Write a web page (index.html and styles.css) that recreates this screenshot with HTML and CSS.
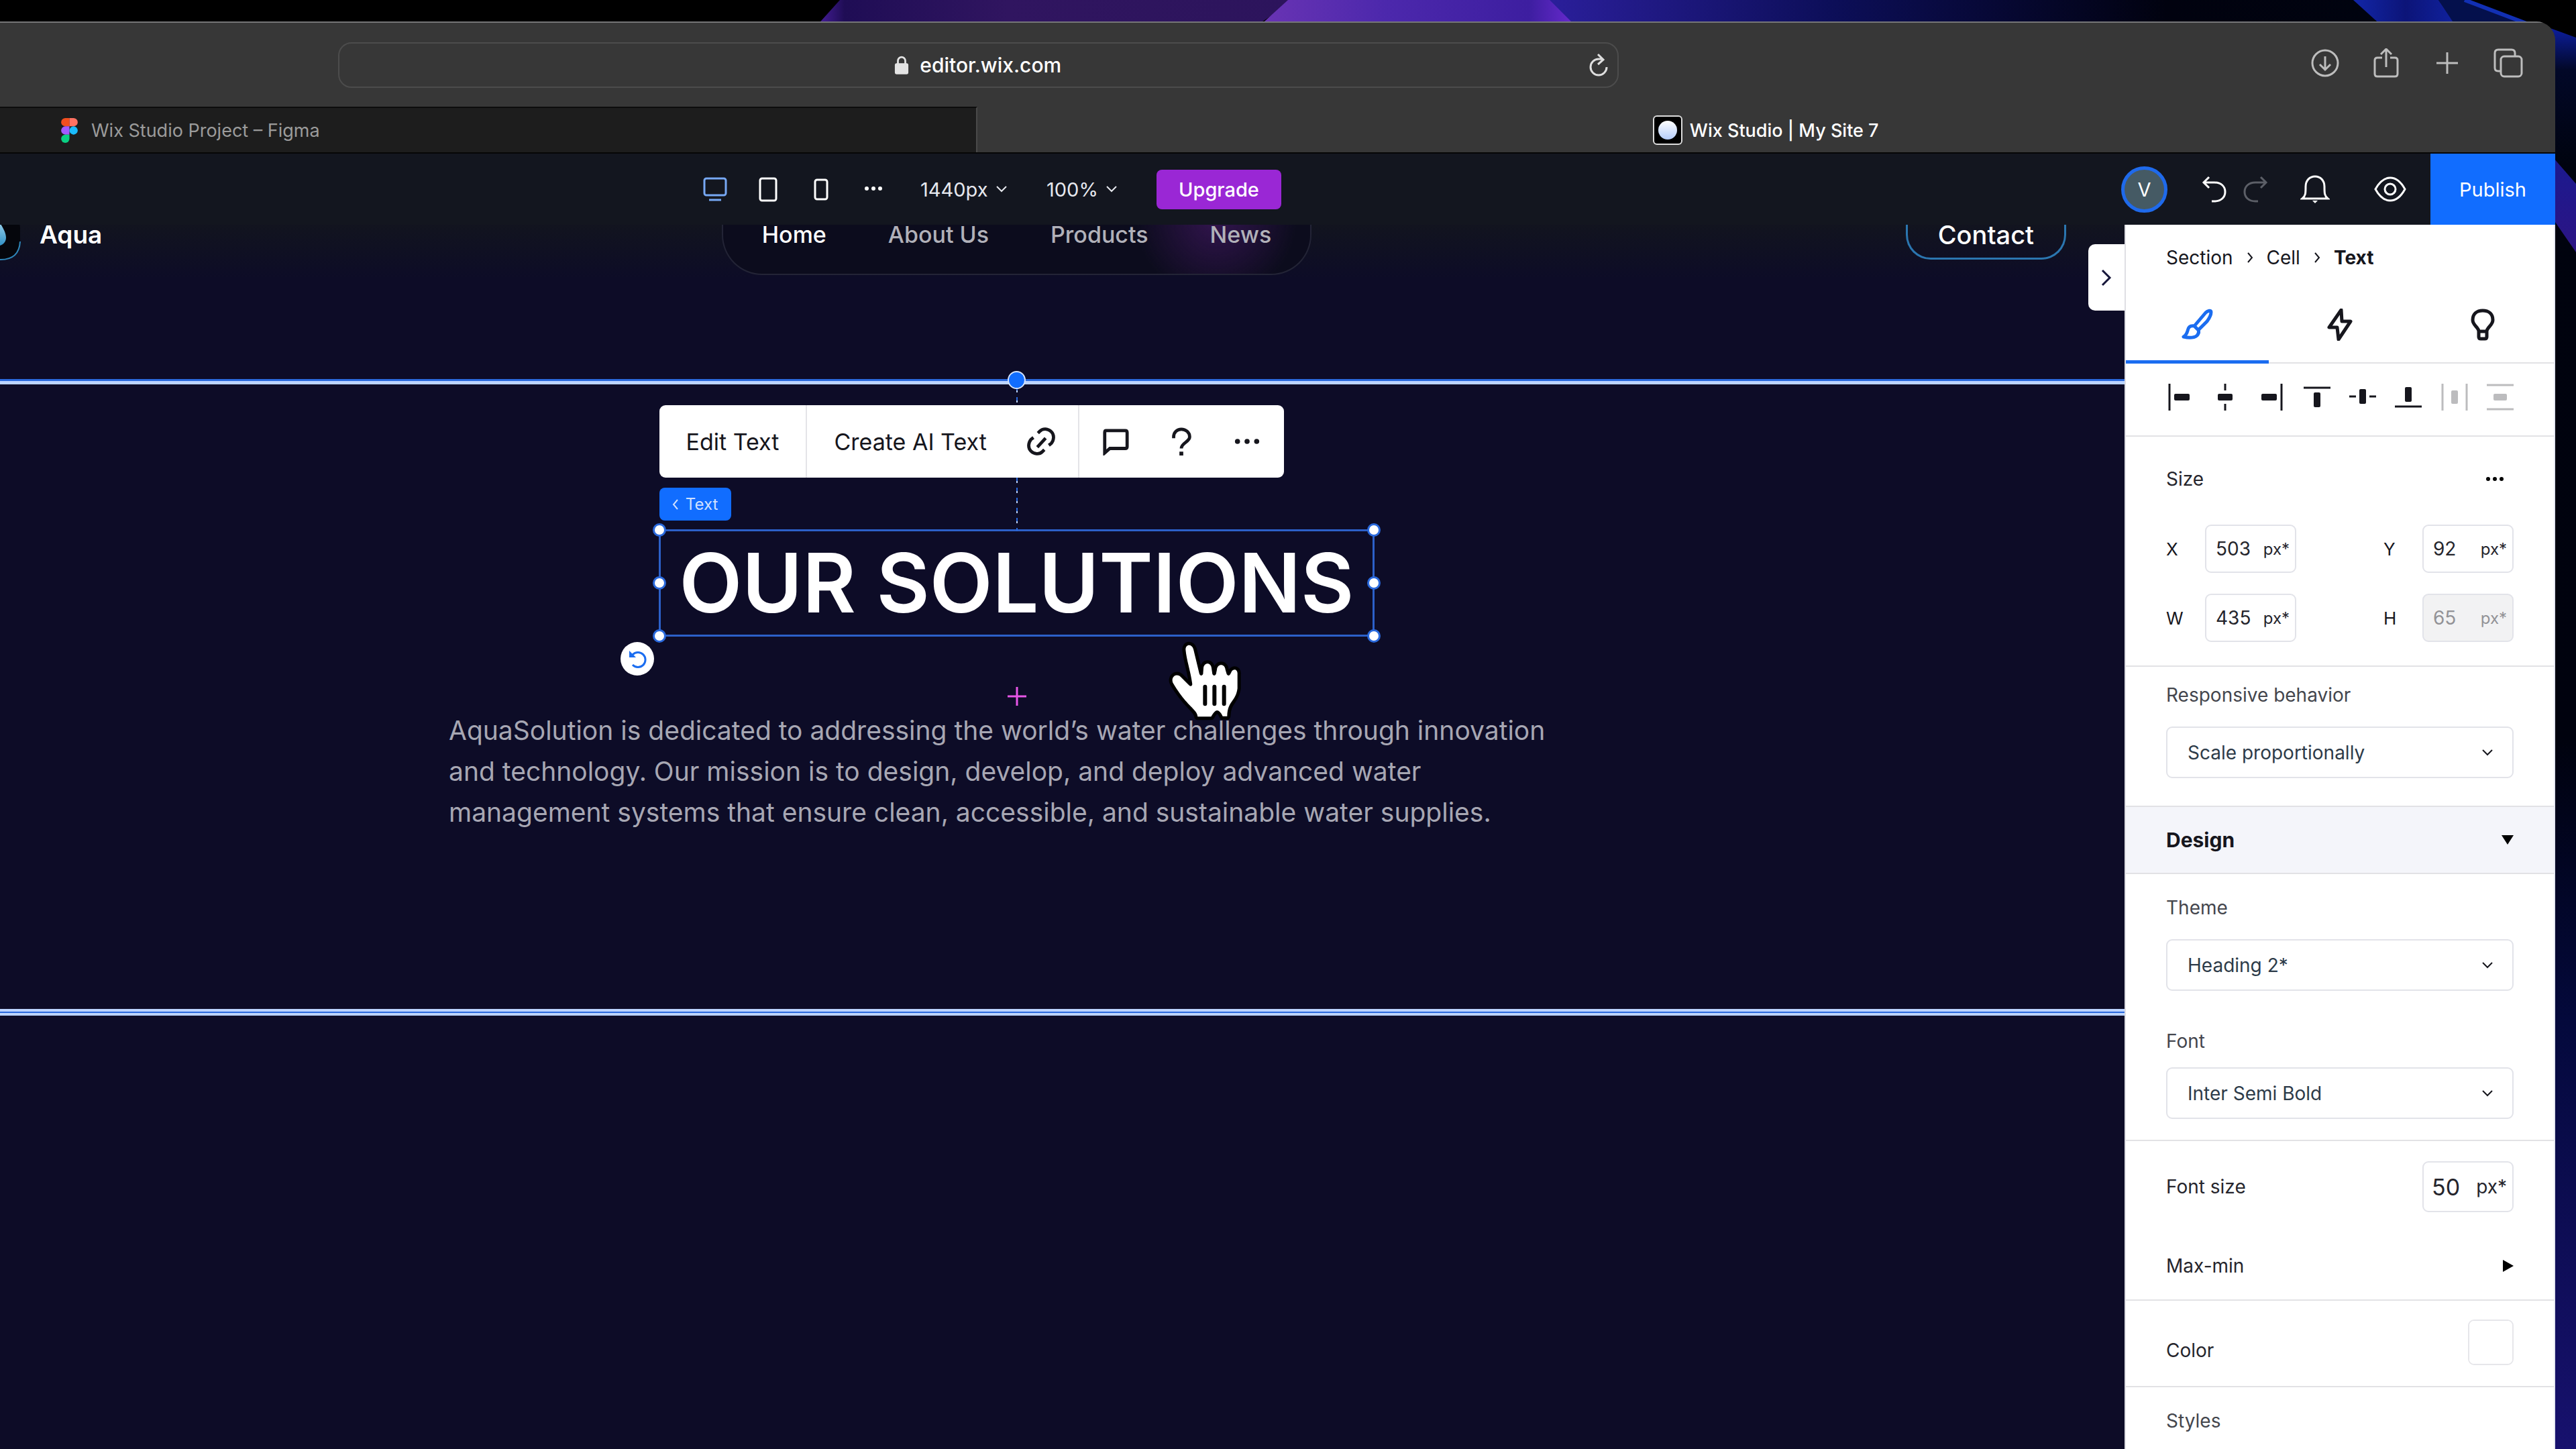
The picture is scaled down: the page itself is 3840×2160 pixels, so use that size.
FILE: index.html
```html
<!DOCTYPE html>
<html lang="en">
<head>
    <meta charset="UTF-8">
    <title>Wix Studio | My Site 7</title>
    <link rel="stylesheet" href="styles.css">
</head>
<body>
    <svg class="wallpaper" viewBox="0 0 3840 2160" preserveAspectRatio="none" aria-hidden="true">
        <defs>
            <linearGradient id="w1"><stop offset="0" stop-color="#4a1fa0"/><stop offset="0.06" stop-color="#1f0d55"/><stop offset="0.4" stop-color="#301560"/><stop offset="1" stop-color="#2c145c"/></linearGradient>
            <linearGradient id="w2"><stop offset="0" stop-color="#6a34b4"/><stop offset="0.4" stop-color="#4c28ac"/><stop offset="0.85" stop-color="#3d1ea0"/><stop offset="1" stop-color="#6a2ad0"/></linearGradient>
            <linearGradient id="w3"><stop offset="0" stop-color="#2b1f9c"/><stop offset="0.35" stop-color="#0c0e58"/><stop offset="0.75" stop-color="#01020f"/><stop offset="1" stop-color="#00030f"/></linearGradient>
            <linearGradient id="w4"><stop offset="0" stop-color="#1226a8"/><stop offset="0.5" stop-color="#0c1478"/><stop offset="1" stop-color="#1022a0"/></linearGradient>
            <linearGradient id="w5" x1="0" y1="0" x2="0" y2="1"><stop offset="0" stop-color="#0c1ea0"/><stop offset="0.03" stop-color="#020828"/><stop offset="0.1" stop-color="#00030e"/><stop offset="0.5" stop-color="#00020e"/><stop offset="0.7" stop-color="#04093c"/><stop offset="1" stop-color="#17116e"/></linearGradient>
            <linearGradient id="w6" x1="0" y1="0" x2="0" y2="1"><stop offset="0" stop-color="#1a1a90"/><stop offset="1" stop-color="#2c1484"/></linearGradient>
        </defs>
        <path d="M1252 0H1930L1870 40H1216Z" fill="url(#w1)"/>
        <path d="M2300 0H3540V40H2300Z" fill="url(#w3)"/>
        <path d="M1920 0H2310L2350 40H1876Z" fill="url(#w2)"/>
        <path d="M3508 0H3635L3664 40H3552Z" fill="url(#w4)"/>
        <path d="M3635 0H3674L3790 44H3664Z" fill="#04104c"/>
        <path d="M3674 0L3790 44" stroke="#1230b4" stroke-width="6"/>
        <path d="M3796 40L3840 56V2160H3796Z" fill="url(#w5)"/>
        <path d="M3800 228L3840 274V376L3800 318Z" fill="url(#w6)"/>
    </svg>

    <div class="browser">
        <header class="toolbar">
            <div class="address">
                <svg class="lock" viewBox="0 0 24 32"><path d="M6 14V9a6 6 0 0 1 12 0v5" fill="none" stroke="#e4e4e4" stroke-width="3"/><rect x="1" y="13" width="22" height="18" rx="3" fill="#e4e4e4"/></svg>
                <input class="url" type="text" value="editor.wix.com" aria-label="Address">
                <button class="reload" aria-label="Reload"><svg viewBox="0 0 32 38"><path d="M15 3L23 11L15 18M22 10H16A12 12 0 1 0 28 22" /></svg></button>
            </div>
            <div class="actions">
                <button aria-label="Downloads"><svg viewBox="0 0 44 44"><circle cx="22" cy="22" r="19"/><path d="M22 12V31M14 24L22 32L30 24"/></svg></button>
                <button aria-label="Share"><svg viewBox="0 0 44 44"><path d="M16 14H9Q5 14 5 18V38Q5 42 9 42H35Q39 42 39 38V18Q39 14 35 14H28M22 28V2M14 9L22 1L30 9"/></svg></button>
                <button aria-label="New tab"><svg viewBox="0 0 44 44"><path d="M22 6V38M6 22H38"/></svg></button>
                <button aria-label="Tab overview"><svg viewBox="0 0 44 44"><rect x="11" y="12" width="31" height="30" rx="5"/><path d="M11 34H7Q2 34 2 29V7Q2 2 7 2H27Q32 2 32 7V12"/></svg></button>
            </div>
        </header>

        <nav class="tabs">
            <a class="tab" href="#figma">
                <svg class="figma" viewBox="0 0 24 36"><path d="M12 0H6a6 6 0 0 0 0 12h6z" fill="#f24e1e"/><path d="M12 0h6a6 6 0 0 1 0 12h-6z" fill="#ff7262"/><path d="M12 12H6a6 6 0 0 0 0 12h6z" fill="#a259ff"/><circle cx="18" cy="18" r="6" fill="#1abcfe"/><path d="M12 24H6a6 6 0 1 0 6 6z" fill="#0acf83"/></svg>
                Wix Studio Project – Figma
            </a>
            <a class="tab current" href="#studio">
                <span class="favicon"></span>
                Wix Studio | My Site 7
            </a>
        </nav>

        <div class="editor-bar">
            <div class="view-tools">
                <div class="devices">
                    <button class="on" aria-label="Desktop"><svg viewBox="0 0 44 44"><rect x="6" y="6" width="32" height="25" rx="3"/><path d="M13 38H31"/></svg></button>
                    <button aria-label="Tablet"><svg viewBox="0 0 44 44"><rect x="10" y="6" width="24" height="33" rx="3"/></svg></button>
                    <button aria-label="Phone"><svg viewBox="0 0 44 44"><rect x="13" y="8" width="18" height="29" rx="3"/></svg></button>
                    <button aria-label="More breakpoints"><svg class="solid" viewBox="0 0 44 44"><circle cx="11" cy="21" r="3"/><circle cx="21" cy="21" r="3"/><circle cx="31" cy="21" r="3"/></svg></button>
                </div>
                <label class="bar-select">
                    <select aria-label="Canvas width"><option>1440px</option></select>
                    <svg viewBox="0 0 16 10"><path d="M1 1L8 8L15 1"/></svg>
                </label>
                <label class="bar-select">
                    <select aria-label="Zoom"><option>100%</option></select>
                    <svg viewBox="0 0 16 10"><path d="M1 1L8 8L15 1"/></svg>
                </label>
                <button class="upgrade">Upgrade</button>
            </div>
            <div class="account-tools">
                <button class="avatar">V</button>
                <div class="history">
                    <button aria-label="Undo"><svg viewBox="0 0 44 44"><path d="M14 4L6 12L14 20M6 12H22C32 12 38 18 38 26S32 40 22 40H18"/></svg></button>
                    <button class="off" aria-label="Redo"><svg viewBox="0 0 44 44"><path d="M30 4L38 12L30 20M38 12H22C12 12 6 18 6 26S12 40 22 40H26"/></svg></button>
                </div>
                <button class="wide" aria-label="Notifications"><svg viewBox="0 0 44 44"><path d="M3 36C8 32 8 28 8 18C8 9 14 3 22 3S36 9 36 18C36 28 36 32 41 36Z"/><path class="clapper" d="M18 39H26L22 43Z"/></svg></button>
                <button class="wide" aria-label="Preview"><svg class="eye" viewBox="0 0 48 44"><path d="M2 22C8 11 15 5 24 5S40 11 46 22C40 33 33 39 24 39S8 33 2 22Z"/><circle cx="24" cy="22" r="8"/></svg></button>
                <button class="publish">Publish</button>
            </div>
        </div>

        <div class="workspace">
            <main class="canvas">
                <!-- the header is scrolled half under the editor bar -->
                <div class="site-header">
                    <a class="brand" href="#aqua">
                        <svg class="logo" viewBox="0 23 76 53">
                            <defs><linearGradient id="drop" x1="0" y1="0" x2="0" y2="1"><stop offset="0" stop-color="#b8e4f8"/><stop offset="1" stop-color="#2f8fc4"/></linearGradient></defs>
                            <rect x="1" y="1" width="74" height="74" rx="28" fill="#05060c"/>
                            <path d="M75 48C74 66 64 75 46 75H28" fill="none" stroke="#2e86b8" stroke-width="2"/>
                            <path d="M38 8C44 20 54 32 54 42C54 50 48 55 38 55S22 50 22 42C22 32 32 20 38 8Z" fill="url(#drop)"/>
                        </svg>
                        Aqua
                    </a>
                    <nav class="menu">
                        <a class="active" href="#home">Home</a>
                        <a href="#about">About Us</a>
                        <a href="#products">Products</a>
                        <a href="#news">News</a>
                    </nav>
                    <a class="contact" href="#contact">Contact</a>
                </div>

                <section class="solutions">
                    <div class="selected">
                        <h1>OUR SOLUTIONS</h1>
                        <div class="guide"></div>
                        <div class="anchor"></div>
                        <div class="text-toolbar">
                            <button>Edit Text</button>
                            <div class="group">
                                <button class="ai">Create AI Text</button>
                                <button class="tool" aria-label="Link"><svg viewBox="0 0 44 44"><path d="M16 31L29 17M17 9L20 6C25 1 33 2 38 7S42 20 38 25L34 28M27 35L24 38C19 43 11 42 6 37S2 24 6 19L10 16"/></svg></button>
                            </div>
                            <div class="group">
                                <button class="tool" aria-label="Comment"><svg viewBox="0 0 44 44"><path d="M7 5H37Q40 5 40 8V30Q40 33 37 33H13L5 40V8Q5 5 7 5Z"/></svg></button>
                                <button class="tool" aria-label="Help"><svg viewBox="0 0 44 44"><path d="M10 17V15C10 8 15 3 22 3S35 8 35 15C35 23 22 24 22 33"/><rect class="fill" x="19" y="38" width="6" height="6"/></svg></button>
                                <button class="tool" aria-label="More"><svg class="solid" viewBox="0 0 44 44"><circle cx="7" cy="22" r="4"/><circle cx="22" cy="22" r="4"/><circle cx="37" cy="22" r="4"/></svg></button>
                            </div>
                        </div>
                        <button class="tag"><svg viewBox="0 0 10 16"><path d="M8 1L2 8L8 15"/></svg>Text</button>
                        <i class="handle tl"></i><i class="handle tr"></i>
                        <i class="handle ml"></i><i class="handle mr"></i>
                        <i class="handle bl"></i><i class="handle br"></i>
                        <button class="rotate" aria-label="Reset rotation"><svg viewBox="0 0 50 50"><path d="M18 19A11 11 0 1 1 18 34" fill="none" stroke="#1b6df0" stroke-width="3"/><path d="M13 13V23H23Z" fill="#1b6df0"/></svg></button>
                        <svg class="plus" viewBox="0 0 28 28"><path d="M14 0V28M0 14H28"/></svg>
                        <svg class="cursor" viewBox="0 0 480 480">
                            <path class="hand" d="M148 112C148 86 176 86 183 110L210 222Q218 234 226 222L228 195C230 168 262 168 264 195L268 222Q276 234 284 222L288 202C290 174 324 174 326 202L332 222Q340 234 348 222L354 210C362 196 382 200 380 222V286C372 346 336 340 334 410H314Q302 384 288 384Q276 386 262 412H202C200 378 156 370 92 262C80 238 104 214 126 234L162 270Q174 282 178 268C172 214 152 160 148 112Z"/>
                            <path d="M235 278V355M277 278V355M320 278V355" stroke="#000" stroke-width="18" stroke-linecap="round"/>
                        </svg>
                    </div>
                    <p class="intro">AquaSolution is dedicated to addressing the world’s water challenges through innovation and technology. Our mission is to design, develop, and deploy advanced water management systems that ensure clean, accessible, and sustainable water supplies.</p>
                </section>

                <button class="collapse" aria-label="Collapse panel"><svg viewBox="0 0 16 26"><path d="M2 2L13 13L2 24"/></svg></button>
            </main>

            <aside class="inspector">
                <nav class="crumbs">
                    <a href="#section">Section</a>
                    <svg viewBox="0 0 10 16"><path d="M2 1L8 8L2 15"/></svg>
                    <a href="#cell">Cell</a>
                    <svg viewBox="0 0 10 16"><path d="M2 1L8 8L2 15"/></svg>
                    <b>Text</b>
                </nav>

                <div class="panel-tabs">
                    <button class="on" aria-label="Design"><svg viewBox="0 0 48 48"><path d="M20 26L37 6C40 3 45 2 45 5C45 9 42 15 39 19L26 32M20 26L26 32M20 26C13 25 11 28 10 33C9 37 7 40 4 42C12 44 22 44 25 39C27 36 27 34 26 32"/></svg></button>
                    <button aria-label="Interactions"><svg viewBox="0 0 48 48"><path d="M26 2L8 28H20L22 46L40 19H27Z"/></svg></button>
                    <button aria-label="Tips"><svg viewBox="0 0 48 48"><path d="M18 34C18 28 9 25 9 17C9 8 15 3 24 3S39 8 39 17C39 25 30 28 30 34V42Q30 45 27 45H21Q18 45 18 42ZM18 34H30"/></svg></button>
                </div>

                <div class="align">
                    <button aria-label="Align left"><svg viewBox="0 0 40 40"><path d="M5 0V40"/><rect x="12" y="15" width="23" height="10" rx="2"/></svg></button>
                    <button aria-label="Align center"><svg viewBox="0 0 40 40"><path d="M20 0V10M20 30V40"/><rect x="9" y="15" width="22" height="10" rx="2"/></svg></button>
                    <button aria-label="Align right"><svg viewBox="0 0 40 40"><path d="M35 0V40"/><rect x="5" y="15" width="23" height="10" rx="2"/></svg></button>
                    <button aria-label="Align top"><svg viewBox="0 0 40 40"><path d="M0 6H40"/><rect x="15" y="13" width="10" height="22" rx="2"/></svg></button>
                    <button aria-label="Align middle"><svg viewBox="0 0 40 40"><path d="M0 19H10M30 19H40"/><rect x="15" y="8" width="10" height="22" rx="2"/></svg></button>
                    <button aria-label="Align bottom"><svg viewBox="0 0 40 40"><path d="M0 34H40"/><rect x="15" y="5" width="10" height="22" rx="2"/></svg></button>
                    <button class="off" aria-label="Distribute horizontally"><svg viewBox="0 0 40 40"><path d="M2 0V40M38 0V40"/><rect x="15" y="10" width="10" height="20" rx="2"/></svg></button>
                    <button class="off" aria-label="Distribute vertically"><svg viewBox="0 0 40 40"><path d="M0 2H40M0 38H40"/><rect x="10" y="15" width="20" height="10" rx="2"/></svg></button>
                </div>

                <div class="block size">
                    <div class="row">
                        <span class="name">Size</span>
                        <button class="more" aria-label="More"><svg viewBox="0 0 28 8"><circle cx="4" cy="4" r="3"/><circle cx="14" cy="4" r="3"/><circle cx="24" cy="4" r="3"/></svg></button>
                    </div>
                    <div class="fields">
                        <label for="x">X</label>
                        <div class="num"><input id="x" type="text" value="503"><span>px*</span></div>
                        <label for="y">Y</label>
                        <div class="num"><input id="y" type="text" value="92"><span>px*</span></div>
                        <label for="w">W</label>
                        <div class="num"><input id="w" type="text" value="435"><span>px*</span></div>
                        <label for="h">H</label>
                        <div class="num disabled"><input id="h" type="text" value="65" disabled><span>px*</span></div>
                    </div>
                </div>

                <div class="block behavior">
                    <label class="name soft" for="behavior">Responsive behavior</label>
                    <div class="select">
                        <select id="behavior"><option>Scale proportionally</option></select>
                        <svg viewBox="0 0 16 10"><path d="M1 1L8 8L15 1"/></svg>
                    </div>
                </div>

                <button class="block accordion">Design<svg viewBox="0 0 18 14"><path d="M0 0H18L9 14Z"/></svg></button>

                <div class="block type">
                    <label class="name soft" for="theme">Theme</label>
                    <div class="select">
                        <select id="theme"><option>Heading 2*</option></select>
                        <svg viewBox="0 0 16 10"><path d="M1 1L8 8L15 1"/></svg>
                    </div>
                    <label class="name soft second" for="font">Font</label>
                    <div class="select">
                        <select id="font"><option>Inter Semi Bold</option></select>
                        <svg viewBox="0 0 16 10"><path d="M1 1L8 8L15 1"/></svg>
                    </div>
                </div>

                <div class="block scale">
                    <div class="row">
                        <label class="name" for="fontsize">Font size</label>
                        <div class="num big"><input id="fontsize" type="text" value="50"><span>px*</span></div>
                    </div>
                    <button class="row maxmin">Max-min<svg viewBox="0 0 16 18"><path d="M0 0V18L16 9Z"/></svg></button>
                </div>

                <div class="block color">
                    <label class="name" for="color">Color</label>
                    <input id="color" type="color" value="#ffffff">
                </div>

                <div class="block styles"><span class="name soft">Styles</span></div>
            </aside>
        </div>
    </div>
</body>
</html>
```
FILE: styles.css
```css
* {
    box-sizing: border-box;
}

body {
    margin: 0;
    background: #000;
    font-family: Inter, "Liberation Sans", sans-serif;
    font-size: 28px;
    color: #16161d;
    overflow: hidden;
}

button, input, select {
    margin: 0;
    padding: 0;
    border: 0;
    background: none;
    color: inherit;
    font: inherit;
    appearance: none;
}

button {
    display: flex;
    align-items: center;
    justify-content: center;
}

a {
    color: inherit;
    text-decoration: none;
}

svg {
    display: block;
    flex: none;
    fill: none;
    stroke: currentColor;
    stroke-width: 3;
}

.wallpaper {
    position: absolute;
    inset: 0;
    width: 100%;
    height: 100%;
    stroke: none;
    z-index: -1;
}

.browser {
    display: flex;
    flex-direction: column;
    min-height: calc(100vh - 32px);
    margin: 32px 31px 0 0;
    border-top-right-radius: 28px;
    overflow: hidden;
    background: #373737;
}

/* browser chrome */
.toolbar {
    display: grid;
    grid-template-columns: 1908fr 1396fr;
    align-items: center;
    height: 127px;
    padding-left: 504px;
    border-top: 2px solid #757577;
}

.address {
    display: flex;
    align-items: center;
    justify-content: center;
    gap: 16px;
    height: 68px;
    border: 2px solid #4c4c4c;
    border-radius: 20px;
    position: relative;
    color: #fff;
}

.lock {
    width: 22px;
    height: 32px;
    stroke: none;
}

.url {
    width: 212px;
    font-size: 30px;
    font-weight: 500;
}

.reload {
    position: absolute;
    right: 12px;
    color: #dedede;
}

.reload svg {
    width: 32px;
    height: 38px;
}

.actions {
    display: flex;
    justify-content: flex-end;
    gap: 47px;
    padding: 0 48px 6px 0;
    color: #bdbdbd;
}

.actions svg {
    width: 44px;
    height: 44px;
}

.tabs {
    display: grid;
    grid-template-columns: 1457fr 2351fr;
    height: 70px;
    border-bottom: 2px solid #060606;
}

.tab {
    display: flex;
    align-items: center;
    gap: 20px;
    padding-left: 91px;
    background: #1d1d1d;
    border-top: 2px solid #0c0c0c;
    border-right: 2px solid #4a4a4a;
    color: #9b9b9b;
    font-size: 27px;
}

.tab.current {
    justify-content: center;
    gap: 11px;
    padding: 0;
    background: none;
    border-color: transparent;
    color: #fff;
    font-weight: 500;
}

.figma {
    width: 25px;
    height: 37px;
    stroke: none;
}

.favicon {
    display: flex;
    align-items: center;
    justify-content: center;
    width: 44px;
    height: 44px;
    border: 2px solid #dcdcdc;
    border-radius: 6px;
    background: #000;
}

.favicon::before {
    content: "";
    width: 28px;
    height: 28px;
    border-radius: 50%;
    background: linear-gradient(#fff, #b4ccfb);
}

/* editor top bar */
.editor-bar {
    display: flex;
    justify-content: space-between;
    height: 106px;
    padding-left: 1044px;
    background: #13161f;
    color: #fff;
    font-size: 29px;
}

.editor-bar svg {
    width: 44px;
    height: 44px;
}

.view-tools, .account-tools, .history, .devices {
    display: flex;
    align-items: center;
}

.devices {
    gap: 35px;
    margin-right: 47px;
}

.devices .on {
    color: #77a8f4;
}

svg.solid {
    fill: currentColor;
    stroke: none;
}

.bar-select {
    display: flex;
    align-items: center;
    gap: 12px;
    margin-right: 59px;
    color: #e6e8ee;
}

.editor-bar .bar-select svg {
    width: 16px;
    height: 10px;
    stroke-width: 2;
}

.upgrade {
    height: 59px;
    padding: 0 33px;
    border-radius: 8px;
    background: #9a27d5;
    font-weight: 500;
}

.avatar {
    width: 69px;
    height: 69px;
    border: 5px solid #1f6aeb;
    border-radius: 50%;
    background: #455a64;
}

.history {
    gap: 17px;
    margin: 0 35px 0 48px;
}

.off {
    color: #5c5f67;
}

.wide {
    width: 64px;
    margin-right: 48px;
}

.wide + .wide {
    margin-right: 28px;
}

.editor-bar .eye {
    width: 48px;
}

.clapper {
    fill: currentColor;
    stroke: none;
}

.publish {
    align-self: stretch;
    width: 186px;
    background: #116dff;
}

.workspace {
    display: flex;
    flex: 1;
}

/* site canvas */
.canvas {
    position: relative;
    flex: 1;
    background: linear-gradient(#12141f, #0d0c27 80px);
    color: #fff;
}

.site-header {
    display: grid;
    grid-template-columns: 1fr auto 1fr;
    align-items: start;
    margin: 0 136px 158px 0;
    line-height: 30px;
    font-weight: 500;
}

.brand {
    display: flex;
    align-items: flex-start;
    gap: 28px;
    margin-left: -45px;
    font-size: 37px;
    font-weight: 600;
}

.logo {
    width: 76px;
    height: 53px;
    stroke: none;
}

.menu {
    display: flex;
    align-items: flex-start;
    gap: 92px;
    height: 75px;
    padding: 0 58px;
    border: 2px solid #232436;
    border-top: 0;
    border-radius: 0 0 60px 60px;
    background: radial-gradient(circle at 84% -9px, #32144e, rgba(30, 14, 50, 0) 120px), #0c0c1d;
    color: #b1b1b9;
    font-size: 34px;
}

.menu .active {
    color: #fff;
}

.contact {
    justify-self: end;
    height: 52px;
    margin-right: -49px;
    padding: 0 45px;
    border: 3px solid #2b76b0;
    border-top: 0;
    border-radius: 0 0 37px 37px;
    font-size: 38px;
}

.solutions {
    display: flex;
    flex-direction: column;
    align-items: center;
    padding: 216px 136px 269px 0;
    border-top: 5px solid #bcd4ff;
    border-bottom: 4px solid #bcd4ff;
    box-shadow: 0 -3px #2a69dc, inset 0 -2px #2a69dc, inset 0 -6px #bcd4ff;
}

.selected {
    position: relative;
    padding: 2px 28px;
    border: 3px solid #2c60c8;
}

h1 {
    margin: 0;
    font-size: 122px;
    line-height: 150px;
    font-weight: 600;
    white-space: nowrap;
}

.intro {
    width: 1693px;
    margin: 109px 0 0;
    color: #a7a7b3;
    font-size: 39px;
    line-height: 61px;
}

/* editor overlays around the selected text */
.guide {
    position: absolute;
    left: 50%;
    bottom: 100%;
    width: 2px;
    height: 215px;
    background: repeating-linear-gradient(#2a69dc 0 5px, #bcd4ff 5px 8px, transparent 8px 15px);
}

.anchor {
    position: absolute;
    left: calc(50% - 13px);
    bottom: calc(100% + 212px);
    width: 27px;
    height: 27px;
    border: 2px solid #d4e3ff;
    border-radius: 50%;
    background: #116dff;
}

.text-toolbar {
    position: absolute;
    left: -2px;
    bottom: calc(100% + 80px);
    display: flex;
    height: 108px;
    border-radius: 9px;
    background: #fff;
    color: #16161d;
    font-size: 34px;
    white-space: nowrap;
}

.text-toolbar button {
    padding: 0 40px;
}

.text-toolbar .group {
    display: flex;
    padding-right: 6px;
    border-left: 2px solid #e4e4e8;
}

.text-toolbar .group + .group {
    padding-left: 5px;
}

.text-toolbar .ai {
    padding-right: 32px;
}

.text-toolbar .tool {
    padding: 0;
    width: 98px;
}

.text-toolbar svg {
    width: 42px;
    height: 42px;
    stroke-width: 5;
}

.text-toolbar .solid {
    stroke: none;
}

.fill {
    fill: currentColor;
    stroke: none;
}

.tag {
    position: absolute;
    left: -2px;
    bottom: calc(100% + 16px);
    gap: 10px;
    width: 107px;
    height: 49px;
    border-radius: 8px;
    background: #116dff;
    color: #cfe0ff;
    font-size: 24px;
}

.tag svg {
    width: 10px;
    height: 16px;
    stroke-width: 2;
}

.handle {
    position: absolute;
    width: 20px;
    height: 20px;
    border: 3px solid #2a69dc;
    border-radius: 50%;
    background: #fff;
}

.tl, .ml, .bl { left: -12px; }
.tr, .mr, .br { right: -12px; }
.tl, .tr { top: -12px; }
.ml, .mr { top: calc(50% - 10px); }
.bl, .br { bottom: -12px; }

.rotate {
    position: absolute;
    left: -60px;
    top: calc(100% + 11px);
    width: 50px;
    height: 50px;
    border-radius: 50%;
    background: #fff;
}

.rotate svg {
    width: 50px;
    height: 50px;
    stroke: none;
}

.plus {
    position: absolute;
    left: calc(50% - 13px);
    top: calc(100% + 78px);
    width: 28px;
    height: 28px;
    stroke: #e756e8;
    stroke-width: 3;
}

.cursor {
    position: absolute;
    right: 168px;
    bottom: -145px;
    width: 160px;
    height: 160px;
}

.hand {
    fill: #fff;
    stroke: #000;
    stroke-width: 30;
    stroke-linejoin: round;
    paint-order: stroke;
}

.collapse {
    position: absolute;
    right: 0;
    top: 29px;
    width: 54px;
    height: 99px;
    border-radius: 10px 0 0 10px;
    background: #fff;
    color: #16163a;
}

.collapse svg {
    width: 16px;
    height: 26px;
}

/* inspector */
.inspector {
    width: 642px;
    border-left: 2px solid #dfdfe4;
    border-right: 2px solid #e6e8f2;
    background: #fff;
}

.crumbs {
    display: flex;
    align-items: center;
    gap: 20px;
    height: 98px;
    padding: 0 60px;
}

.crumbs svg {
    width: 10px;
    height: 16px;
    stroke-width: 2;
}

.panel-tabs {
    display: flex;
    height: 109px;
    border-bottom: 2px solid #e2e2e5;
}

.panel-tabs button {
    flex: 1;
    padding-bottom: 5px;
}

.panel-tabs .on {
    margin-bottom: -2px;
    padding: 0 0 2px;
    border-bottom: 5px solid #1b6df0;
    color: #1b6df0;
}

.panel-tabs svg {
    width: 48px;
    height: 48px;
    stroke-width: 5;
    stroke-linejoin: round;
}

.align {
    display: flex;
    align-items: center;
    justify-content: space-between;
    height: 109px;
    padding: 0 60px 8px;
    border-bottom: 2px solid #e2e2e5;
}

.align svg {
    width: 40px;
    height: 40px;
}

.align rect {
    fill: currentColor;
    stroke: none;
}

.align .off {
    color: #bcbcbe;
}

.block {
    padding: 28px 60px;
    border-bottom: 2px solid #e2e2e5;
}

.name {
    display: block;
    line-height: 44px;
    color: #25252c;
}

.soft {
    color: #44464d;
}

.row {
    display: flex;
    align-items: center;
    justify-content: space-between;
    width: 100%;
}

.size {
    padding-top: 41px;
    padding-bottom: 35px;
}

.more {
    margin-right: 14px;
}

.more svg, .maxmin svg, .accordion svg {
    width: 28px;
    height: 8px;
    fill: #000;
    stroke: none;
}

.fields {
    display: grid;
    grid-template-columns: 58px 1fr 58px 136px;
    row-gap: 31px;
    align-items: center;
    margin-top: 46px;
}

.fields label {
    font-size: 26px;
}

.num {
    display: flex;
    align-items: center;
    justify-content: space-between;
    width: 136px;
    height: 72px;
    padding: 0 8px 0 14px;
    border: 2px solid #e2e3e9;
    border-radius: 9px;
    color: #25252c;
}

.num input {
    width: 64px;
}

.num span {
    font-size: 24px;
}

.num.big {
    height: 76px;
    padding-left: 12px;
    font-size: 34px;
}

.num.big input {
    width: 56px;
}

.num.big span {
    font-size: 28px;
}

.num.disabled {
    background: #f2f2f3;
    color: #929296;
}

.behavior {
    padding-top: 20px;
    padding-bottom: 41px;
}

.select {
    display: grid;
    align-items: center;
    margin-top: 25px;
}

.select select {
    grid-area: 1 / 1;
    height: 77px;
    padding: 0 30px;
    border: 2px solid #e2e3e9;
    border-radius: 9px;
    color: #2d3b49;
}

.select svg {
    grid-area: 1 / 1;
    justify-self: end;
    width: 16px;
    height: 10px;
    margin-right: 31px;
    stroke-width: 2;
    pointer-events: none;
}

.accordion {
    justify-content: space-between;
    width: 100%;
    height: 100px;
    background: #f4f5fa;
    font-size: 30px;
    font-weight: 700;
}

.accordion svg {
    width: 18px;
    height: 14px;
}

.type {
    padding-bottom: 31px;
}

.second {
    margin-top: 53px;
}

.second + .select {
    margin-top: 17px;
}

.scale {
    padding-top: 30px;
}

.maxmin {
    height: 44px;
    margin-top: 58px;
    color: #25252c;
}

.maxmin svg {
    width: 16px;
    height: 18px;
}

.color {
    display: flex;
    align-items: flex-end;
    justify-content: space-between;
    padding-bottom: 31px;
}

.color input {
    width: 68px;
    height: 68px;
    border: 2px solid #e6e6ea;
    border-radius: 9px;
    overflow: hidden;
}

.color input::-webkit-color-swatch-wrapper {
    padding: 0;
}

.color input::-webkit-color-swatch {
    border: 0;
}

.styles {
    padding-bottom: 16px;
    border-bottom: 0;
}
```
